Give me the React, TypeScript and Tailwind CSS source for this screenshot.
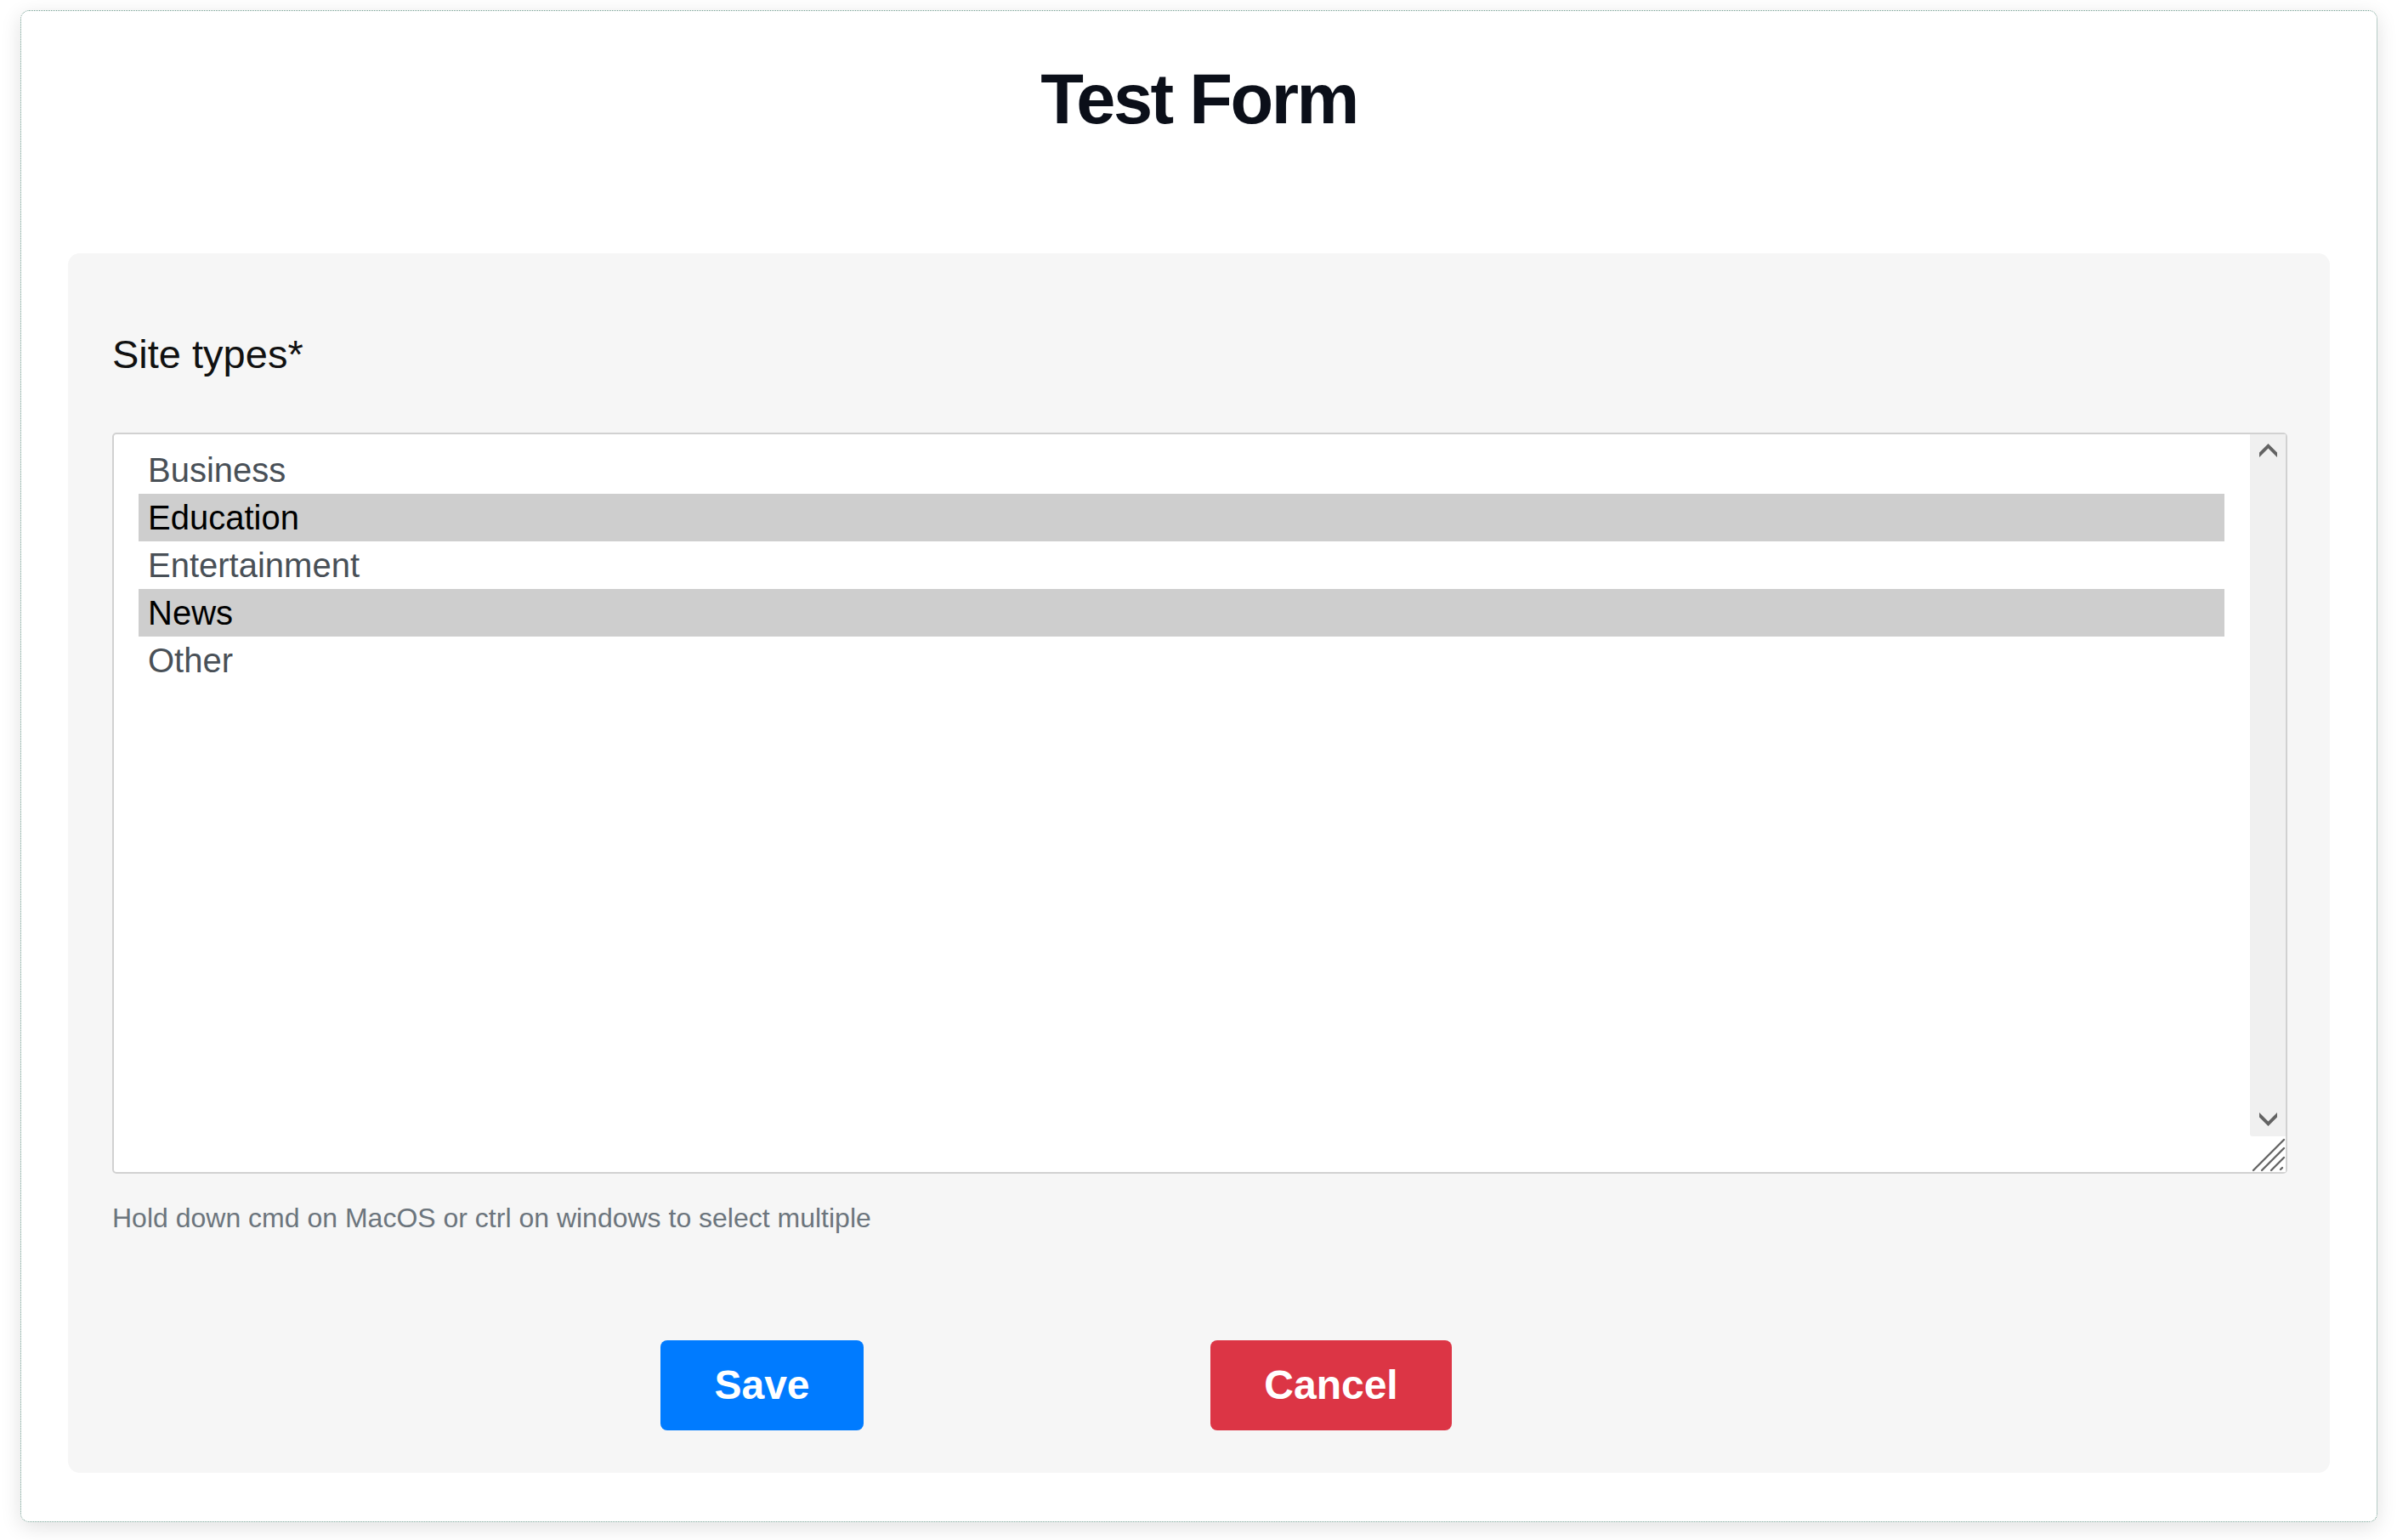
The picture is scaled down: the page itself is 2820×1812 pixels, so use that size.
import React from "react";

const options = [
  { label: "Business", selected: false },
  { label: "Education", selected: true },
  { label: "Entertainment", selected: false },
  { label: "News", selected: true },
  { label: "Other", selected: false },
];

const ScrollBar = () => (
  <div className="flex w-[42px] flex-col">
    <div className="flex flex-1 flex-col items-center justify-between rounded-bl-[3px] bg-[#f0f0f0] pt-[11px] pb-[12px]">
      <svg width="21" height="16" viewBox="0 0 21 16">
        <path d="M10.5 0 L21 10.5 L21 16 L10.5 5.5 L0 16 L0 10.5 Z" fill="#636363" />
      </svg>
      <svg width="21" height="16" viewBox="0 0 21 16">
        <path d="M10.5 16 L21 5.5 L21 0 L10.5 10.5 L0 0 L0 5.5 Z" fill="#636363" />
      </svg>
    </div>
    <div className="h-[42px] bg-white">
      <svg width="42" height="42" viewBox="0 0 42 42">
        <g stroke="#666666" strokeWidth="2.4" strokeLinecap="round">
          <line x1="4" y1="40" x2="40" y2="4" />
          <line x1="14" y1="40" x2="40" y2="14" />
          <line x1="25" y1="40" x2="40" y2="25" />
          <line x1="36" y1="39" x2="38" y2="37" />
        </g>
      </svg>
    </div>
  </div>
);

export default function App() {
  return (
    <div className="min-h-screen bg-white pt-[12px] pb-[24px] font-['Liberation_Sans',Arial,sans-serif]">
      <div className="ml-[24px] mr-[23px] rounded-[10px] border border-dotted border-[#6f9c8f] bg-white px-[55px] pt-[62px] pb-[57px] shadow-[0_6px_24px_rgba(0,0,0,0.12)]">
        <h1 className="text-center text-[83px] leading-none font-bold tracking-[-2.5px] text-[#0b0f19]">
          Test Form
        </h1>

        <div className="mt-[140px] rounded-[14px] bg-[#f6f6f6] pt-[95px] pr-[50px] pb-[50px] pl-[52px]">
          <label className="block text-[47px] leading-none text-[#111111]">Site types*</label>

          <div className="mt-[69px] flex h-[872px] rounded-[5px] border-2 border-[#d1d1d1] bg-white">
            <div className="flex-1 pt-[14px] pr-[30px] pl-[29px]">
              {options.map((o) => (
                <div
                  key={o.label}
                  className={
                    o.selected
                      ? "h-[56px] bg-[#cecece] pl-[11px] text-[40px] leading-[56px] text-black"
                      : "h-[56px] pl-[11px] text-[40px] leading-[56px] text-[#495057]"
                  }
                >
                  {o.label}
                </div>
              ))}
            </div>
            <ScrollBar />
          </div>

          <p className="mt-[36px] text-[32px] leading-none text-[#6c757d]">
            Hold down cmd on MacOS or ctrl on windows to select multiple
          </p>

          <div className="mt-[128px] flex gap-[408px] pl-[645px]">
            <button className="flex h-[106px] w-[239px] items-center justify-center rounded-[8px] bg-[#007bff] text-[48px] font-bold text-white">
              Save
            </button>
            <button className="flex h-[106px] w-[284px] items-center justify-center rounded-[8px] bg-[#dc3545] text-[48px] font-bold text-white">
              Cancel
            </button>
          </div>
        </div>
      </div>
    </div>
  );
}
